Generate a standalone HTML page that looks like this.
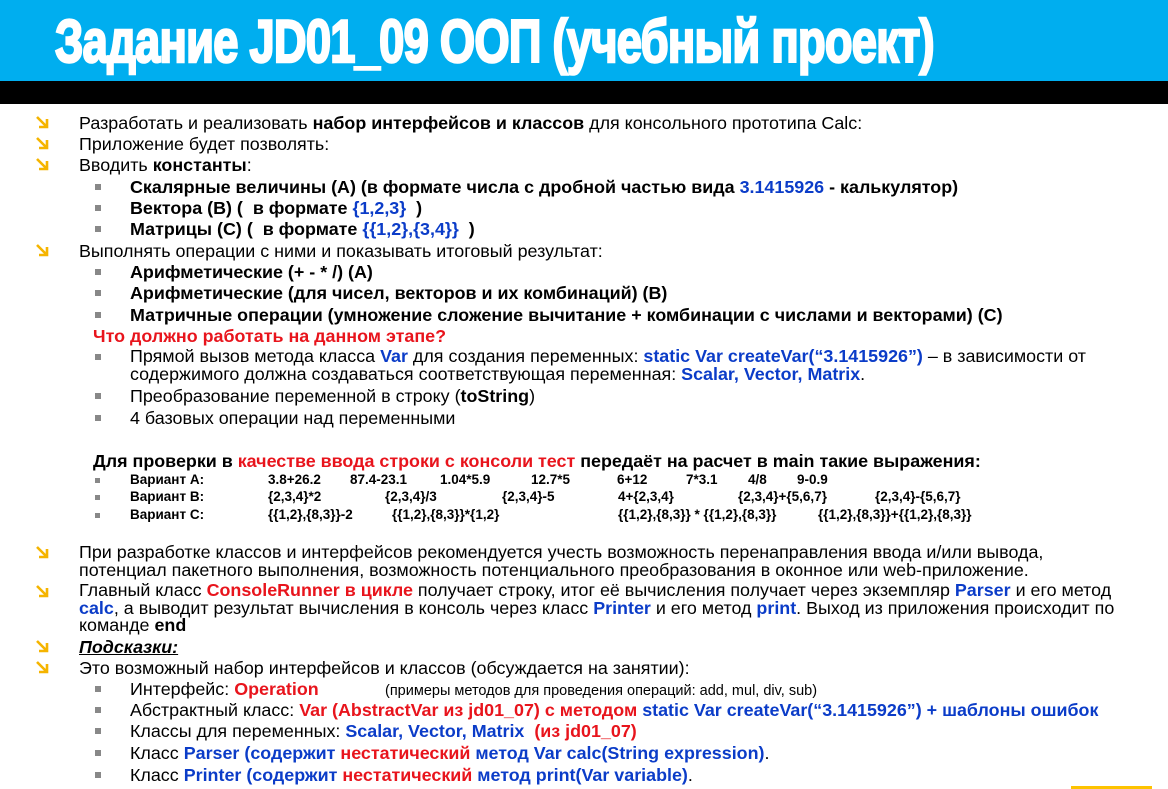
<!DOCTYPE html>
<html><head><meta charset="utf-8">
<style>
html,body{margin:0;padding:0}
body{width:1168px;height:789px;position:relative;overflow:hidden;background:#fff;font-family:"Liberation Sans","DejaVu Sans",sans-serif;color:#000}
#hdr{position:absolute;left:0;top:0;width:1168px;height:81px;background:#00aeef}
#blk{position:absolute;left:0;top:81px;width:1168px;height:23px;background:#000}
#title{position:absolute;left:55px;top:10px;font-weight:bold;font-size:60px;color:#fff;line-height:64px;white-space:nowrap;transform-origin:0 0;transform:scaleX(0.755);letter-spacing:-1px;-webkit-text-stroke:2.5px #fff}
.l{position:absolute;font-size:17.9px;line-height:20px;white-space:nowrap}
.ar{position:absolute;width:14px;height:14px}
.sq{position:absolute;width:6px;height:6px;background:#888}
b{font-weight:bold}
.bl{color:#0b3cc8;font-weight:bold}
.rd{color:#e8141c;font-weight:bold}
.v{position:absolute;font-size:13.5px;font-weight:bold;white-space:nowrap;line-height:16px}
#yb{position:absolute;left:1071px;top:786px;width:81px;height:3px;background:#fdc300}
</style></head><body>
<div id="hdr"></div><div id="blk"></div>
<div id="title">Задание JD01_09 ООП (учебный проект)</div>

<svg width="0" height="0" style="position:absolute"><defs><g id="a"><path d="M2 2 L11 11 M4 12 H12 V4" stroke="#f5b400" stroke-width="2.6" fill="none"/></g></defs></svg>

<svg class="ar" style="left:35px;top:115px"><use href="#a"/></svg>
<div class="l" style="left:79px;top:113px">Разработать и реализовать <b>набор интерфейсов и классов</b> для консольного прототипа Calc:</div>
<svg class="ar" style="left:35px;top:136px"><use href="#a"/></svg>
<div class="l" style="left:79px;top:134px">Приложение будет позволять:</div>
<svg class="ar" style="left:35px;top:157px"><use href="#a"/></svg>
<div class="l" style="left:79px;top:155px">Вводить <b>константы</b>:</div>

<div class="sq" style="left:95px;top:184px"></div>
<div class="l" style="left:130px;top:177px"><b>Скалярные величины (А) (в формате числа с дробной частью вида <span class="bl">3.1415926</span> - калькулятор)</b></div>
<div class="sq" style="left:95px;top:205px"></div>
<div class="l" style="left:130px;top:198px"><b>Вектора (В) (&nbsp; в формате <span class="bl">{1,2,3}</span>&nbsp; )</b></div>
<div class="sq" style="left:95px;top:226px"></div>
<div class="l" style="left:130px;top:219px"><b>Матрицы (С) (&nbsp; в формате <span class="bl">{{1,2},{3,4}}</span>&nbsp; )</b></div>

<svg class="ar" style="left:35px;top:243px"><use href="#a"/></svg>
<div class="l" style="left:79px;top:241px">Выполнять операции с ними и показывать итоговый результат:</div>
<div class="sq" style="left:95px;top:269px"></div>
<div class="l" style="left:130px;top:262px"><b>Арифметические (+ - * /) (А)</b></div>
<div class="sq" style="left:95px;top:290px"></div>
<div class="l" style="left:130px;top:283px"><b>Арифметические (для чисел, векторов и их комбинаций) (В)</b></div>
<div class="sq" style="left:95px;top:312px"></div>
<div class="l" style="left:130px;top:305px"><b>Матричные операции (умножение сложение вычитание + комбинации с числами и векторами) (С)</b></div>
<div class="l rd" style="left:93px;top:326px">Что должно работать на данном этапе?</div>
<div class="sq" style="left:95px;top:354px"></div>
<div class="l" style="left:130px;top:347px;line-height:18px">Прямой вызов метода класса <span class="bl">Var</span> для создания переменных: <span class="bl">static Var createVar(“3.1415926”)</span> – в зависимости от<br>содержимого должна создаваться соответствующая переменная: <span class="bl">Scalar, Vector, Matrix</span>.</div>
<div class="sq" style="left:95px;top:393px"></div>
<div class="l" style="left:130px;top:386px">Преобразование переменной в строку (<b>toString</b>)</div>
<div class="sq" style="left:95px;top:415px"></div>
<div class="l" style="left:130px;top:408px">4 базовых операции над переменными</div>

<div class="l" style="left:93px;top:451px"><b>Для проверки в <span class="rd">качестве ввода строки с консоли тест</span> передаёт на расчет в main такие выражения:</b></div>
<div class="sq" style="left:95px;top:478px;width:5px;height:5px"></div>
<div class="sq" style="left:95px;top:495px;width:5px;height:5px"></div>
<div class="sq" style="left:95px;top:513px;width:5px;height:5px"></div>
<div class="v" style="left:130px;top:472px">Вариант A:</div>
<div class="v" style="left:268px;top:472px">3.8+26.2</div>
<div class="v" style="left:350px;top:472px">87.4-23.1</div>
<div class="v" style="left:440px;top:472px">1.04*5.9</div>
<div class="v" style="left:531px;top:472px">12.7*5</div>
<div class="v" style="left:617px;top:472px">6+12</div>
<div class="v" style="left:686px;top:472px">7*3.1</div>
<div class="v" style="left:748px;top:472px">4/8</div>
<div class="v" style="left:797px;top:472px">9-0.9</div>
<div class="v" style="left:130px;top:489px">Вариант B:</div>
<div class="v" style="left:268px;top:489px">{2,3,4}*2</div>
<div class="v" style="left:385px;top:489px">{2,3,4}/3</div>
<div class="v" style="left:502px;top:489px">{2,3,4}-5</div>
<div class="v" style="left:618px;top:489px">4+{2,3,4}</div>
<div class="v" style="left:738px;top:489px">{2,3,4}+{5,6,7}</div>
<div class="v" style="left:875px;top:489px">{2,3,4}-{5,6,7}</div>
<div class="v" style="left:130px;top:507px">Вариант C:</div>
<div class="v" style="left:268px;top:507px">{{1,2},{8,3}}-2</div>
<div class="v" style="left:392px;top:507px">{{1,2},{8,3}}*{1,2}</div>
<div class="v" style="left:618px;top:507px">{{1,2},{8,3}} * {{1,2},{8,3}}</div>
<div class="v" style="left:818px;top:507px">{{1,2},{8,3}}+{{1,2},{8,3}}</div>

<svg class="ar" style="left:35px;top:545px"><use href="#a"/></svg>
<div class="l" style="left:79px;top:543px;line-height:18px">При разработке классов и интерфейсов рекомендуется учесть возможность перенаправления ввода и/или вывода,<br>потенциал пакетного выполнения, возможность потенциального преобразования в оконное или web-приложение.</div>
<svg class="ar" style="left:35px;top:584px"><use href="#a"/></svg>
<div class="l" style="left:79px;top:582px;line-height:17.5px">Главный класс <span class="rd">ConsoleRunner в цикле</span> получает строку, итог её вычисления получает через экземпляр <span class="bl">Parser</span> и его метод<br><span class="bl">calc</span>, а выводит результат вычисления в консоль через класс <span class="bl">Printer</span> и его метод <span class="bl">print</span>. Выход из приложения происходит по<br>команде <b>end</b></div>
<svg class="ar" style="left:35px;top:639px"><use href="#a"/></svg>
<div class="l" style="left:79px;top:637px"><b><i><u>Подсказки:</u></i></b></div>
<svg class="ar" style="left:35px;top:660px"><use href="#a"/></svg>
<div class="l" style="left:79px;top:658px">Это возможный набор интерфейсов и классов (обсуждается на занятии):</div>
<div class="sq" style="left:95px;top:686px"></div>
<div class="l" style="left:130px;top:679px">Интерфейс: <span class="rd">Operation</span></div>
<div class="l" style="left:385px;top:681px;font-size:14.5px">(примеры методов для проведения операций: add, mul, div, sub)</div>
<div class="sq" style="left:95px;top:707px"></div>
<div class="l" style="left:130px;top:700px">Абстрактный класс: <span class="rd">Var (AbstractVar из jd01_07) с методом</span> <span class="bl">static Var createVar(“3.1415926”) + шаблоны ошибок</span></div>
<div class="sq" style="left:95px;top:728px"></div>
<div class="l" style="left:130px;top:721px">Классы для переменных: <span class="bl">Scalar, Vector, Matrix</span>&nbsp; <span class="rd">(из jd01_07)</span></div>
<div class="sq" style="left:95px;top:750px"></div>
<div class="l" style="left:130px;top:743px">Класс <span class="bl">Parser (содержит <span class="rd">нестатический</span> метод Var calc(String expression)</span>.</div>
<div class="sq" style="left:95px;top:772px"></div>
<div class="l" style="left:130px;top:765px">Класс <span class="bl">Printer (содержит <span class="rd">нестатический</span> метод print(Var variable)</span>.</div>
<div id="yb"></div>
</body></html>
